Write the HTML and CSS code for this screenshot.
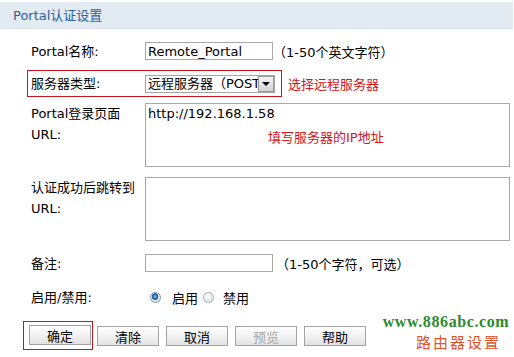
FILE: index.html
```html
<!DOCTYPE html>
<html lang="zh-CN">
<head>
    <meta charset="UTF-8">
    <title>Portal认证设置</title>
    <link rel="stylesheet" href="styles.css">
</head>
<body>
    <div class="title-bar">
        <span class="title">Portal认证设置</span>
    </div>

    <div class="form">
        <div class="row row-name">
            <span class="label">Portal名称:</span>
            <input class="text" type="text" value="Remote_Portal">
            <span class="hint">（1-50个英文字符）</span>
        </div>

        <div class="row-wrap">
            <div class="row row-marked">
                <span class="label">服务器类型:</span>
                <div class="select">
                    <span class="select-value">远程服务器（POST）</span>
                    <span class="select-arrow"></span>
                </div>
            </div>
            <span class="note">选择远程服务器</span>
        </div>

        <div class="row row-area">
            <span class="label">Portal登录页面<br>URL:</span>
            <div class="area-wrap">
                <textarea class="area">http://192.168.1.58</textarea>
                <span class="area-note">填写服务器的IP地址</span>
            </div>
        </div>

        <div class="row row-area row-area-2">
            <span class="label">认证成功后跳转到<br>URL:</span>
            <div class="area-wrap">
                <textarea class="area"></textarea>
            </div>
        </div>

        <div class="row row-remark">
            <span class="label">备注:</span>
            <input class="text" type="text" value="">
            <span class="hint hint-remark">（1-50个字符，可选）</span>
        </div>

        <div class="row row-radio">
            <span class="label">启用/禁用:</span>
            <span class="radio checked"></span>
            <span class="radio-text">启用</span>
            <span class="radio"></span>
            <span class="radio-text radio-text-2">禁用</span>
        </div>

        <div class="buttons">
            <div class="btn-marked">
                <button class="btn">确定</button>
            </div>
            <button class="btn btn-first">清除</button>
            <button class="btn">取消</button>
            <button class="btn" disabled>预览</button>
            <button class="btn">帮助</button>
        </div>
    </div>

    <div class="watermark">
        <div class="wm-url">www.886abc.com</div>
        <div class="wm-name">路由器设置</div>
    </div>
</body>
</html>
```

FILE: styles.css
```css
/* Base */
body {
    margin: 0;
    font-family: "DejaVu Sans", "Noto Sans CJK SC", sans-serif;
    font-size: 13px;
    color: #000;
    background: #fff;
    position: relative;
    height: 357px;
    overflow: hidden;
}

.title-bar {
    margin-top: 2px;
    width: 513px;
    height: 27px;
    background: #e2ebf2;
    border-bottom: 1px solid #d9e3eb;
    box-sizing: border-box;
}

.title {
    display: block;
    padding-left: 13px;
    line-height: 27px;
    color: #30609a;
}

/* Rows */
.row {
    display: flex;
    align-items: center;
    margin-left: 27px;
    padding-left: 3px;
    border-left: 1px solid transparent;
}

.label {
    flex: none;
    width: 114px;
    line-height: 21px;
}

.row-name {
    margin-top: 13px;
    height: 18px;
}

.text {
    width: 128px;
    height: 18px;
    margin: 0;
    padding: 0 2px;
    box-sizing: border-box;
    border: 1px solid #a9a9a9;
    font: inherit;
    font-size: 13px;
    color: #000;
    outline: none;
}

.hint {
    margin-left: 0;
    white-space: nowrap;
}

.hint-remark {
    margin-left: 3px;
}

.row-wrap {
    display: flex;
    align-items: center;
    margin-top: 10px;
}

.row-marked {
    width: 255px;
    height: 27px;
    box-sizing: border-box;
    border: 1px solid #c8161c;
}

.note {
    margin-left: 6px;
    color: #d4141a;
}

.select {
    display: flex;
    width: 130px;
    height: 18px;
    box-sizing: border-box;
    border: 1px solid #a5a5a5;
    overflow: hidden;
}

.select-value {
    flex: 1;
    padding-left: 2px;
    line-height: 16px;
    white-space: nowrap;
    overflow: hidden;
}

.select-arrow {
    flex: none;
    width: 16px;
    height: 16px;
    box-sizing: border-box;
    border: 1px solid #9a9a9a;
    background: linear-gradient(#f4f4f4, #d4d4d4);
    position: relative;
}

.select-arrow::after {
    content: "";
    position: absolute;
    left: 3px;
    top: 5px;
    border-left: 4px solid transparent;
    border-right: 4px solid transparent;
    border-top: 4px solid #000;
}

/* Text areas */
.row-area {
    align-items: flex-start;
    margin-top: 6px;
}

.row-area-2 {
    margin-top: 10px;
}

.area-wrap {
    position: relative;
}

.area {
    display: block;
    width: 365px;
    height: 64px;
    margin: 0;
    padding: 1px 2px;
    box-sizing: border-box;
    border: 1px solid #a9a9a9;
    font: inherit;
    font-size: 13px;
    line-height: 18px;
    resize: none;
    outline: none;
    overflow: hidden;
}

.area-note {
    position: absolute;
    left: 123px;
    top: 24px;
    color: #d4141a;
    white-space: nowrap;
}

.row-remark {
    margin-top: 13px;
    height: 18px;
}

/* Radio */
.row-radio {
    margin-top: 16px;
    height: 18px;
}

.radio {
    flex: none;
    width: 11px;
    height: 11px;
    margin-left: 5px;
    box-sizing: border-box;
    border-radius: 50%;
    border: 1px solid #a8b0b8;
    background: radial-gradient(circle at 40% 35%, #fff, #d8d8d8);
}

.radio.checked {
    border-color: #7f96aa;
    background: radial-gradient(circle at 45% 40%, #8fc3ea 0, #1c5e9c 2.5px, #1c5e9c 3px, #e8eef2 3.6px, #cfd8e0 100%);
}

.radio-text {
    margin-left: 11px;
}

.radio-text-2 {
    margin-left: 9px;
}

/* Buttons */
.buttons {
    display: flex;
    align-items: center;
    margin-top: 15px;
    margin-left: 23px;
}

.btn-marked {
    padding: 3px 1px 4px 5px;
    border: 1px solid #c8161c;
}

.btn {
    width: 62px;
    height: 20px;
    margin: 0 0 0 7px;
    padding: 0;
    border: 1px solid #a3a3a3;
    background: linear-gradient(#ffffff, #f2f2f2 50%, #e2e2e2);
    font: inherit;
    font-size: 13px;
    color: #000;
}

.btn-marked .btn {
    margin: 0;
    display: block;
}

.btn-first {
    margin-left: 4px;
}

.btn:disabled {
    color: #a8a8a8;
}

/* Watermark */
.watermark {
    position: absolute;
    left: 380px;
    top: 312px;
    width: 132px;
}

.wm-url {
    text-align: center;
    font-family: "Liberation Serif", serif;
    font-weight: bold;
    font-size: 16px;
    letter-spacing: 0.6px;
    line-height: 19px;
    color: #2c8a2c;
}

.wm-name {
    margin-top: 2px;
    padding-left: 36px;
    font-family: "Noto Sans CJK SC", sans-serif;
    font-size: 15px;
    letter-spacing: 2px;
    line-height: 18px;
    color: #e0542c;
}
```
